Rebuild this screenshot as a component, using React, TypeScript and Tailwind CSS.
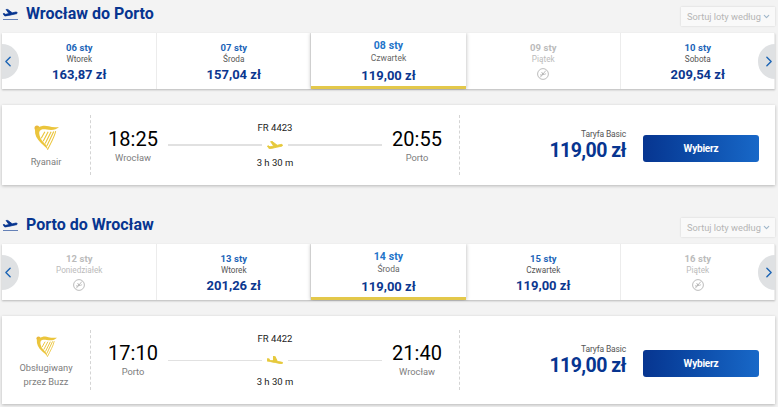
import clsx from "clsx";
import { ChevronDown, ChevronLeft, ChevronRight } from "lucide-react";

interface Day {
  date: string;
  weekday: string;
  price?: string;
  selected?: boolean;
}

interface Flight {
  airline: string[];
  departure: string;
  from: string;
  arrival: string;
  to: string;
  number: string;
  duration: string;
  price: string;
  landing?: boolean;
}

const outboundDays: Day[] = [
  { date: "06 sty", weekday: "Wtorek", price: "163,87 zł" },
  { date: "07 sty", weekday: "Środa", price: "157,04 zł" },
  { date: "08 sty", weekday: "Czwartek", price: "119,00 zł", selected: true },
  { date: "09 sty", weekday: "Piątek" },
  { date: "10 sty", weekday: "Sobota", price: "209,54 zł" },
];

const returnDays: Day[] = [
  { date: "12 sty", weekday: "Poniedziałek" },
  { date: "13 sty", weekday: "Wtorek", price: "201,26 zł" },
  { date: "14 sty", weekday: "Środa", price: "119,00 zł", selected: true },
  { date: "15 sty", weekday: "Czwartek", price: "119,00 zł" },
  { date: "16 sty", weekday: "Piątek" },
];

const TAKEOFF =
  "M22.07 9.64c-.21-.8-1.04-1.28-1.84-1.06L14.92 10l-6.9-6.43-1.93.51 4.14 7.17-4.97 1.33-1.97-1.54-1.45.39 2.59 4.49s7.12-1.9 16.57-4.43c.81-.23 1.28-1.05 1.07-1.85z";
const LANDING =
  "M19.34 15.85c.8.21 1.62-.26 1.84-1.06.21-.8-.26-1.62-1.06-1.84l-5.31-1.42-2.76-9.02L10.12 2v8.28L5.15 8.95l-.93-2.32-1.45-.39v5.17l16.57 4.44z";

function TitleIcon() {
  return (
    <svg className="h-[13px] w-[16px] text-[#073590]" viewBox="0 0 16 13" fill="currentColor">
      <svg x="0.7" y="0.8" width="15" height="7.6" viewBox="1.3 3 21.4 13.2" preserveAspectRatio="none">
        <path d={TAKEOFF} stroke="currentColor" strokeWidth="1.2" strokeLinejoin="round" />
      </svg>
      <rect x="1" y="11" width="15" height="1" opacity="0.6" />
    </svg>
  );
}

function Harp({ className }: { className: string }) {
  return (
    <svg className={className} viewBox="0 0 76 74" fill="none" preserveAspectRatio="none">
      <circle cx="9" cy="9" r="7.5" fill="#e9b93c" />
      <path
        d="M11 8C24 1 35 1 45 4c10 3 20 3 31 2-6 6-14 9-24 9-15 0-20-4-30-1-7 3-7 9-5 17 2 11 10 18 17 25 5 5 7 10 8 18-5-9-13-13-21-21C8 41 2 29 3 14z"
        fill="#ebc53c"
      />
      <path d="M66 18C62 36 52 52 41 73" stroke="#ebc53c" strokeWidth="3" />
      <path
        d="M33 20L22 39M43 20L28 48M52 20L34 55M60 19L39 62"
        stroke="#ebc53c"
        strokeWidth="3.5"
      />
    </svg>
  );
}

function NoFlight() {
  return (
    <svg className="mx-auto mt-[3px] size-[12px] text-[#b4b4b4]" viewBox="0 0 12 12" fill="none">
      <circle cx="6" cy="6" r="5.4" stroke="currentColor" strokeWidth="0.9" />
      <svg x="2.3" y="2.4" width="7.5" height="7" viewBox="0 2 24 16">
        <path d={TAKEOFF} fill="currentColor" />
      </svg>
      <path d="M3.2 9.4L8.8 2.6" stroke="currentColor" strokeWidth="0.9" />
    </svg>
  );
}

function DayTab({ day }: { day: Day }) {
  if (day.selected) {
    return (
      <div className="z-10 h-[56px] w-[155px] border-b-[3px] border-[#e3c84a] bg-white pt-[7px] text-center shadow-[0_0_4px_rgba(0,0,0,0.3)] [clip-path:inset(0_-6px_-1px_-6px)]">
        <p className="text-[10.5px] leading-[12px] font-bold tracking-[0.1px] text-[#2273c9]">{day.date}</p>
        <p className="text-[8.5px] leading-[12px] text-[#666]">{day.weekday}</p>
        <p className="text-[13px] leading-[24px] font-bold text-[#0c378f]">{day.price}</p>
      </div>
    );
  }

  return (
    <div className="h-[56px] min-w-0 flex-1 border-r border-[#ececec] pt-[9px] pl-px text-center last:border-r-0">
      <p
        className={clsx(
          "text-[9.5px] leading-[12px] font-bold tracking-[0.1px]",
          day.price ? "text-[#1b64b8]" : "text-[#bbb]"
        )}
      >
        {day.date}
      </p>
      <p className={clsx("text-[8.2px] leading-[11px]", day.price ? "text-[#555]" : "text-[#bbb]")}>
        {day.weekday}
      </p>
      {day.price ? (
        <p className="text-[13px] leading-[20px] font-bold text-[#0c378f]">{day.price}</p>
      ) : (
        <NoFlight />
      )}
    </div>
  );
}

function DayStrip({ days }: { days: Day[] }) {
  return (
    <div className="relative flex h-[56px] bg-white shadow-[0_1px_2px_rgba(0,0,0,0.25)]">
      {days.map((day) => (
        <DayTab key={day.date} day={day} />
      ))}
      <button className="absolute top-[11px] left-0 flex h-[35px] w-[17px] items-center rounded-r-full bg-[#dfe1e3] text-[#1d65b5]">
        <ChevronLeft className="-ml-[3px] h-[17px] w-[18px] shrink-0" strokeWidth={2} />
      </button>
      <button className="absolute top-[11px] right-0 flex h-[35px] w-[17px] items-center rounded-l-full bg-[#dfe1e3] text-[#1d65b5]">
        <ChevronRight className="ml-[2px] h-[17px] w-[18px] shrink-0" strokeWidth={2} />
      </button>
    </div>
  );
}

function SectionHeader({ title }: { title: string }) {
  return (
    <div className="flex h-[33px] justify-between">
      <div className="flex items-start pt-[8px]">
        <TitleIcon />
        <h2 className="-mt-[4px] ml-[8px] text-[16px] leading-[20px] font-bold text-[#073590]">{title}</h2>
      </div>
      <button className="mt-[7px] flex h-[19px] w-[94px] items-center bg-[#f9f9f9] pl-[5px] text-[9.25px] whitespace-nowrap text-[#b5b5b5] shadow-[0_0_2px_rgba(0,0,0,0.14)]">
        <span className="w-[76px]">Sortuj loty według</span>
        <ChevronDown className="size-[9px] shrink-0 text-[#9fb6c9]" strokeWidth={3} />
      </button>
    </div>
  );
}

function TimeBlock({ time, city }: { time: string; city: string }) {
  return (
    <div className="w-[50px] text-center whitespace-nowrap">
      <p className="text-[20px] leading-[22px] text-black">{time}</p>
      <p className="text-[9.3px] leading-[16px] text-[#7d7d7d]">{city}</p>
    </div>
  );
}

function FlightCard({ flight }: { flight: Flight }) {
  const { landing } = flight;
  const line = clsx("w-[94px] bg-[#e1e1e1]", landing ? "h-px" : "h-[2px]");

  return (
    <div
      className={clsx(
        "flex items-center bg-white shadow-[0_1px_3px_rgba(0,0,0,0.25)]",
        landing ? "h-[88px]" : "h-[80px]"
      )}
    >
      <div className="flex w-[88px] flex-col items-center pt-[4px] text-[9.3px] leading-[14px] text-[#7d7d7d]">
        <Harp className={landing ? "mb-[4px] h-[21px] w-[21px]" : "mb-[5px] h-[25px] w-[25px]"} />
        {flight.airline.map((row) => (
          <span key={row}>{row}</span>
        ))}
      </div>
      <div className="flex h-[60px] w-[370px] items-center border-x border-dashed border-[#d4d4d4] pl-[17px]">
        <div className={landing ? "pt-px" : "pt-[3px]"}>
          <TimeBlock time={flight.departure} city={flight.from} />
        </div>
        <div className="mx-[10px] flex w-[214px] flex-col items-center text-[9.5px] leading-[12px] text-[#222]">
          <span>{flight.number}</span>
          <div className={clsx("flex w-full items-center justify-between", landing ? "h-[31px]" : "h-[23px]")}>
            <div className={line} />
            <svg
              className="h-[8px] w-[16px] text-[#e6c93c]"
              viewBox={landing ? "2 1.5 20 15" : "1.3 3 21.4 13.2"}
              preserveAspectRatio="none"
              fill="currentColor"
              stroke="currentColor"
              strokeWidth="1.3"
              strokeLinejoin="round"
            >
              <path d={landing ? LANDING : TAKEOFF} />
            </svg>
            <div className={line} />
          </div>
          <span>{flight.duration}</span>
        </div>
        <div className={landing ? "pt-px" : "pt-[3px]"}>
          <TimeBlock time={flight.arrival} city={flight.to} />
        </div>
      </div>
      <div className="w-[166px] pb-[2px] text-right">
        <p className="text-[8.5px] leading-[13px] tracking-[-0.15px] text-[#555]">Taryfa Basic</p>
        <p className="text-[19.5px] leading-[20px] font-bold tracking-[-0.55px] text-[#073590]">{flight.price}</p>
      </div>
      <button className="mt-[7px] ml-[17px] h-[27px] w-[116px] rounded-[3px] bg-linear-to-r from-[#073590] to-[#1868c8] text-[10px] font-bold tracking-[-0.2px] text-white">
        Wybierz
      </button>
    </div>
  );
}

export default function App() {
  return (
    <div className="h-[407px] w-[778px] overflow-hidden bg-[#f3f3f3] pr-[3px] pl-[2px] font-['Roboto',sans-serif]">
      <section>
        <SectionHeader title="Wrocław do Porto" />
        <DayStrip days={outboundDays} />
        <div className="mt-[16px]">
          <FlightCard
            flight={{
              airline: ["Ryanair"],
              departure: "18:25",
              from: "Wrocław",
              arrival: "20:55",
              to: "Porto",
              number: "FR 4423",
              duration: "3 h 30 m",
              price: "119,00 zł",
            }}
          />
        </div>
      </section>
      <section className="mt-[26px]">
        <SectionHeader title="Porto do Wrocław" />
        <DayStrip days={returnDays} />
        <div className="mt-[16px]">
          <FlightCard
            flight={{
              airline: ["Obsługiwany", "przez Buzz"],
              departure: "17:10",
              from: "Porto",
              arrival: "21:40",
              to: "Wrocław",
              number: "FR 4422",
              duration: "3 h 30 m",
              price: "119,00 zł",
              landing: true,
            }}
          />
        </div>
      </section>
    </div>
  );
}
